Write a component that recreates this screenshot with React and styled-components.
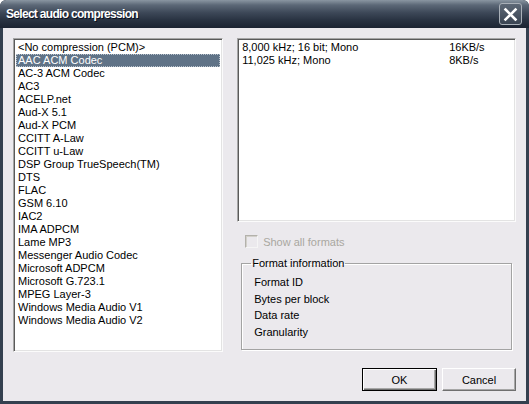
import styled, { createGlobalStyle } from "styled-components"

const GlobalStyle = createGlobalStyle`
    html, body {
        margin: 0;
        padding: 0;
        background: #ffffff;
    }
    * {
        box-sizing: border-box;
    }
`

const Window = styled.div`
    width: 529px;
    height: 404px;
    display: flex;
    flex-direction: column;
    background: #34404f;
    border-radius: 6px 6px 0 0;
    padding: 0 3px 3px 3px;
    font-family: "Liberation Sans", Tahoma, sans-serif;
    font-size: 11px;
    color: #000;
    overflow: hidden;
`

const TitleBar = styled.div`
    height: 28px;
    margin: 0 -3px;
    padding: 0 7px 0 6px;
    display: flex;
    align-items: center;
    justify-content: space-between;
    background: linear-gradient(#8a96a2 0%, #5c6877 18%, #3d4858 45%, #2a3443 70%, #1c2432 100%);
    border-radius: 6px 6px 0 0;
`

const Title = styled.span`
    color: #fff;
    font-weight: bold;
    font-size: 12px;
    letter-spacing: -0.7px;
    text-shadow: 1px 1px 0 #0a1020;
`

const CloseButton = styled.button`
    width: 23px;
    height: 22px;
    padding: 0;
    display: flex;
    align-items: center;
    justify-content: center;
    border: 1px solid #a9b0b8;
    border-radius: 3px;
    background: linear-gradient(#5d6876, #3a4452);
`

const Body = styled.div`
    flex: 1;
    background: #ebe9ed;
    padding: 10px;
    display: flex;
    flex-direction: column;
`

const Main = styled.div`
    display: flex;
    gap: 14px;
    height: 314px;
`

const ListBox = styled.div`
    background: #fff;
    border: 1px solid;
    border-color: #a5a5a5 #fbfbfb #fbfbfb #a5a5a5;
    box-shadow: inset 1px 1px 0 #5a5a5a, inset -1px -1px 0 #e3e3e3;
    padding: 2px;
    overflow: hidden;
`

const CodecList = styled(ListBox)`
    width: 211px;
    height: 100%;
`

const Row = styled.div`
    height: 13px;
    line-height: 13px;
    padding-left: 2px;
    white-space: nowrap;
    background: ${p => (p.$selected ? "#607387" : "transparent")};
    color: ${p => (p.$selected ? "#fff" : "#000")};
    outline: ${p => (p.$selected ? "1px dotted #b8c2cc" : "none")};
    outline-offset: -1px;
`

const RightColumn = styled.div`
    width: 280px;
    display: flex;
    flex-direction: column;
`

const FormatList = styled(ListBox)`
    height: 184px;
`

const FormatRow = styled.div`
    display: grid;
    grid-template-columns: 207px 1fr;
    height: 13px;
    line-height: 13px;
    padding-left: 2px;
    white-space: nowrap;
`

const CheckRow = styled.label`
    display: flex;
    align-items: center;
    gap: 5px;
    margin: 13px 0 0 8px;
    height: 13px;
    color: #a9a7a0;
`

const CheckBox = styled.span`
    width: 13px;
    height: 13px;
    border: 1px solid;
    border-color: #b3b1ab #f5f5f5 #f5f5f5 #b3b1ab;
    box-shadow: inset 1px 1px 0 #d2d0ca;
    background: #ebe9ed;
`

const GroupBox = styled.fieldset`
    margin: 9px 4px 0 4px;
    padding: 6px 0 0 12px;
    height: 93px;
    border: 1px solid #a3a3a3;
    box-shadow: 1px 1px 0 #fff, inset 1px 1px 0 #fff;
    border-radius: 0;
`

const Legend = styled.legend`
    padding: 0 1px;
    margin-left: -3px;
    line-height: 13px;
`

const InfoLine = styled.div`
    height: 16.5px;
    line-height: 13px;
`

const Footer = styled.div`
    display: flex;
    justify-content: flex-end;
    gap: 5px;
    margin-top: 16px;
`

const Button = styled.button`
    width: ${p => (p.$default ? "75px" : "74px")};
    height: 23px;
    font-family: inherit;
    font-size: 11px;
    color: #000;
    background: #ebe9ed;
    border: 1px solid;
    border-color: ${p => (p.$default ? "#000" : "#fff #6f6f6f #6f6f6f #fff")};
    box-shadow: ${p =>
        p.$default
            ? "inset 1px 1px 0 #fff, inset -1px -1px 0 #6f6f6f, inset -2px -2px 0 #a7a7a7"
            : "inset -1px -1px 0 #a7a7a7"};
    padding: 0;
`

const codecs = [
    "<No compression (PCM)>",
    "AAC ACM Codec",
    "AC-3 ACM Codec",
    "AC3",
    "ACELP.net",
    "Aud-X 5.1",
    "Aud-X PCM",
    "CCITT A-Law",
    "CCITT u-Law",
    "DSP Group TrueSpeech(TM)",
    "DTS",
    "FLAC",
    "GSM 6.10",
    "IAC2",
    "IMA ADPCM",
    "Lame MP3",
    "Messenger Audio Codec",
    "Microsoft ADPCM",
    "Microsoft G.723.1",
    "MPEG Layer-3",
    "Windows Media Audio V1",
    "Windows Media Audio V2",
]

const formats = [
    { name: "8,000 kHz; 16 bit; Mono", rate: "16KB/s" },
    { name: "11,025 kHz; Mono", rate: "8KB/s" },
]

const info = ["Format ID", "Bytes per block", "Data rate", "Granularity"]

export default function App() {
    return (
        <>
            <GlobalStyle />
            <Window>
                <TitleBar>
                    <Title>Select audio compression</Title>
                    <CloseButton aria-label="Close">
                        <svg width="15" height="15" viewBox="0 0 15 15">
                            <path d="M2.5 2.5 L12.5 12.5 M12.5 2.5 L2.5 12.5" stroke="#fff" strokeWidth="2.6" strokeLinecap="square" />
                        </svg>
                    </CloseButton>
                </TitleBar>
                <Body>
                    <Main>
                        <CodecList>
                            {codecs.map((c, i) => (
                                <Row key={c} $selected={i === 1}>{c}</Row>
                            ))}
                        </CodecList>
                        <RightColumn>
                            <FormatList>
                                {formats.map(f => (
                                    <FormatRow key={f.name}>
                                        <span>{f.name}</span>
                                        <span>{f.rate}</span>
                                    </FormatRow>
                                ))}
                            </FormatList>
                            <CheckRow>
                                <CheckBox />
                                Show all formats
                            </CheckRow>
                            <GroupBox>
                                <Legend>Format information</Legend>
                                {info.map(t => (
                                    <InfoLine key={t}>{t}</InfoLine>
                                ))}
                            </GroupBox>
                        </RightColumn>
                    </Main>
                    <Footer>
                        <Button $default>OK</Button>
                        <Button>Cancel</Button>
                    </Footer>
                </Body>
            </Window>
        </>
    )
}
